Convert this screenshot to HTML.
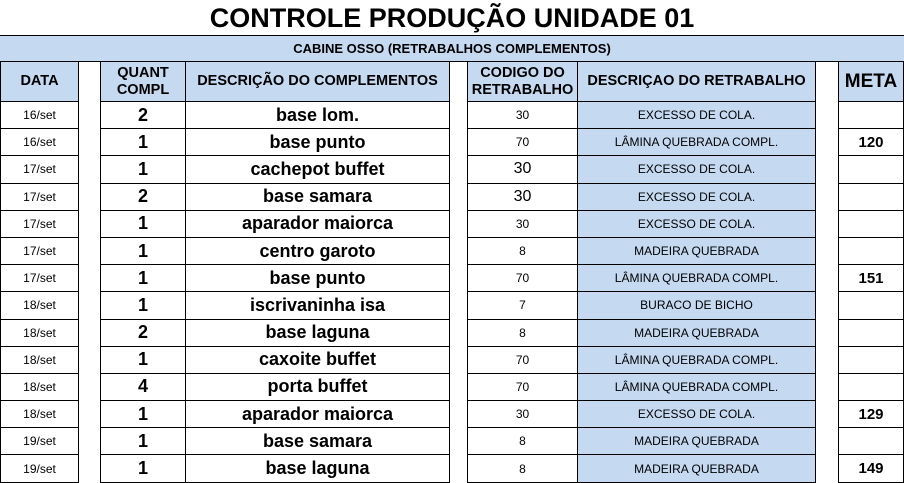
<!DOCTYPE html><html><head><style>
body{margin:0;background:#fff;font-family:"Liberation Sans",Arial,sans-serif;}
.t{position:absolute;left:0;top:0;width:904px;height:35px;text-align:center;font-weight:bold;font-size:27px;line-height:36px;}
.band{position:absolute;left:0;top:35px;width:904px;height:25px;background:#c5d9f1;border-top:1px solid #000;border-bottom:1px solid #000;text-align:center;font-weight:bold;font-size:13px;line-height:25px;}
table{position:absolute;left:0;top:61px;border-collapse:collapse;table-layout:fixed;width:903px;}
td{border:1px solid #000;padding:0;text-align:center;overflow:hidden;white-space:nowrap;}
tr.h td{height:39px;background:#c5d9f1;font-weight:bold;font-size:14.5px;line-height:17px;}
tr.h td.g{background:#fff}
tr.r td{height:26.2px;font-size:12px;}
tr td.g{border-top:none;border-bottom:none;background:#fff}
tr.r td.b{font-weight:bold;font-size:18px}
tr.r td.bl{background:#c5d9f1}
tr.r td.m{font-weight:bold;font-size:15px}
tr.r td.c16{font-size:16px}
</style></head><body>
<div class="t">CONTROLE PRODUÇÃO UNIDADE 01</div>
<div class="band">CABINE OSSO (RETRABALHOS COMPLEMENTOS)</div>
<table>
<colgroup><col style="width:78px"><col style="width:22px"><col style="width:85px"><col style="width:264px"><col style="width:18px"><col style="width:110px"><col style="width:238px"><col style="width:23px"><col style="width:65px"></colgroup>
<tr class="h"><td>DATA</td><td class="g"></td><td>QUANT<br>COMPL</td><td>DESCRIÇÃO DO COMPLEMENTOS</td><td class="g"></td><td>CODIGO DO<br>RETRABALHO</td><td>DESCRIÇAO DO RETRABALHO</td><td class="g"></td><td style="font-size:19px">META</td></tr>
<tr class="r"><td>16/set</td><td class="g"></td><td class="b">2</td><td class="b">base lom.</td><td class="g"></td><td>30</td><td class="bl">EXCESSO DE COLA.</td><td class="g"></td><td class="m"></td></tr>
<tr class="r"><td>16/set</td><td class="g"></td><td class="b">1</td><td class="b">base punto</td><td class="g"></td><td>70</td><td class="bl">LÂMINA QUEBRADA COMPL.</td><td class="g"></td><td class="m">120</td></tr>
<tr class="r"><td>17/set</td><td class="g"></td><td class="b">1</td><td class="b">cachepot buffet</td><td class="g"></td><td class="c16">30</td><td class="bl">EXCESSO DE COLA.</td><td class="g"></td><td class="m"></td></tr>
<tr class="r"><td>17/set</td><td class="g"></td><td class="b">2</td><td class="b">base samara</td><td class="g"></td><td class="c16">30</td><td class="bl">EXCESSO DE COLA.</td><td class="g"></td><td class="m"></td></tr>
<tr class="r"><td>17/set</td><td class="g"></td><td class="b">1</td><td class="b">aparador maiorca</td><td class="g"></td><td>30</td><td class="bl">EXCESSO DE COLA.</td><td class="g"></td><td class="m"></td></tr>
<tr class="r"><td>17/set</td><td class="g"></td><td class="b">1</td><td class="b">centro garoto</td><td class="g"></td><td>8</td><td class="bl">MADEIRA QUEBRADA</td><td class="g"></td><td class="m"></td></tr>
<tr class="r"><td>17/set</td><td class="g"></td><td class="b">1</td><td class="b">base punto</td><td class="g"></td><td>70</td><td class="bl">LÂMINA QUEBRADA COMPL.</td><td class="g"></td><td class="m">151</td></tr>
<tr class="r"><td>18/set</td><td class="g"></td><td class="b">1</td><td class="b">iscrivaninha isa</td><td class="g"></td><td>7</td><td class="bl">BURACO DE BICHO</td><td class="g"></td><td class="m"></td></tr>
<tr class="r"><td>18/set</td><td class="g"></td><td class="b">2</td><td class="b">base laguna</td><td class="g"></td><td>8</td><td class="bl">MADEIRA QUEBRADA</td><td class="g"></td><td class="m"></td></tr>
<tr class="r"><td>18/set</td><td class="g"></td><td class="b">1</td><td class="b">caxoite buffet</td><td class="g"></td><td>70</td><td class="bl">LÂMINA QUEBRADA COMPL.</td><td class="g"></td><td class="m"></td></tr>
<tr class="r"><td>18/set</td><td class="g"></td><td class="b">4</td><td class="b">porta buffet</td><td class="g"></td><td>70</td><td class="bl">LÂMINA QUEBRADA COMPL.</td><td class="g"></td><td class="m"></td></tr>
<tr class="r"><td>18/set</td><td class="g"></td><td class="b">1</td><td class="b">aparador maiorca</td><td class="g"></td><td>30</td><td class="bl">EXCESSO DE COLA.</td><td class="g"></td><td class="m">129</td></tr>
<tr class="r"><td>19/set</td><td class="g"></td><td class="b">1</td><td class="b">base samara</td><td class="g"></td><td>8</td><td class="bl">MADEIRA QUEBRADA</td><td class="g"></td><td class="m"></td></tr>
<tr class="r"><td>19/set</td><td class="g"></td><td class="b">1</td><td class="b">base laguna</td><td class="g"></td><td>8</td><td class="bl">MADEIRA QUEBRADA</td><td class="g"></td><td class="m">149</td></tr>
</table>
</body></html>
